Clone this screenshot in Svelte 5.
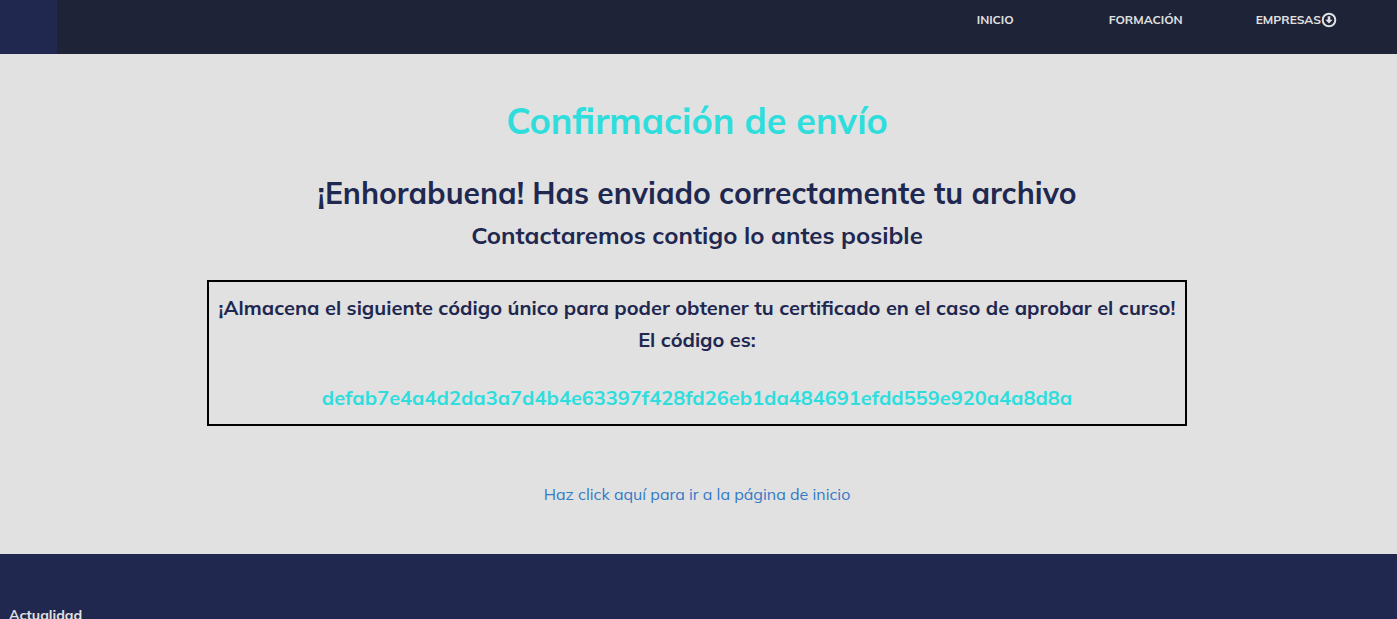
<script>
  const code = 'defab7e4a4d2da3a7d4b4e63397f428fd26eb1da484691efdd559e920a4a8d8a';
</script>

<div class="page">
  <header>
    <div class="brand"></div>
    <nav>
      <a href="#inicio">INICIO</a>
      <a href="#formacion">FORMACIÓN</a>
      <a href="#empresas">EMPRESAS<svg viewBox="0 0 16 16" width="16" height="16" aria-hidden="true">
          <circle cx="8" cy="8" r="6.300" fill="none" stroke="currentColor" stroke-width="2" />
          <path d="M6.700 4.200h2.600v3.600h2.300L8 11.600 4.400 7.800h2.300z" fill="currentColor" />
        </svg></a>
    </nav>
  </header>

  <main>
    <h1>Confirmación de envío</h1>
    <h2>¡Enhorabuena! Has enviado correctamente tu archivo</h2>
    <h3>Contactaremos contigo lo antes posible</h3>
    <section>
      <p>¡Almacena el siguiente código único para poder obtener tu certificado en el caso de aprobar el curso!</p>
      <p>El código es:</p>
      <p class="code">{code}</p>
    </section>
    <a class="home" href="#inicio">Haz click aquí para ir a la página de inicio</a>
  </main>

  <footer>
    <h4>Actualidad</h4>
  </footer>
</div>

<style>
  :global(body) {
    margin: 0;
    background: #20284f;
  }
  .page {
    display: flex;
    flex-direction: column;
    height: 100vh;
    overflow: hidden;
    font-family: Mulish, Muli, Lato, sans-serif;
    color: #1f2850;
    background: #e1e1e1;
  }
  header {
    display: flex;
    flex: none;
    background: #1e2337;
  }
  .brand {
    width: 57px;
    background: #20284f;
  }
  nav {
    display: flex;
    justify-content: flex-end;
    flex: 1;
    padding: 10px 60px 24px 0;
  }
  nav a {
    display: flex;
    align-items: center;
    height: 20px;
    color: #e1e1e1;
    font-size: 12px;
    font-weight: 700;
    line-height: 18px;
    text-decoration: none;
  }
  nav a + a {
    margin-left: 95px;
  }
  nav a:last-child {
    margin-left: 73px;
  }
  main {
    display: flex;
    flex: none;
    flex-direction: column;
    align-items: center;
    padding: 44px 23px 48px 20px;
    text-align: center;
  }
  h1,
  h2,
  h3,
  h4,
  p {
    margin: 0;
    font-weight: 700;
  }
  h1 {
    color: #30dddd;
    font-size: 36px;
    line-height: 46px;
  }
  h2 {
    margin-top: 26px;
    font-size: 30px;
    line-height: 46px;
  }
  h3 {
    font-size: 24px;
    line-height: 38px;
  }
  section {
    box-sizing: border-box;
    width: 100%;
    max-width: 980px;
    margin-top: 26px;
    padding: 10px 4px;
    border: 2px solid #000;
  }
  p {
    font-size: 20px;
    line-height: 32px;
  }
  .code {
    margin-top: 26px;
    color: #30dddd;
    overflow-wrap: anywhere;
  }
  .home {
    margin-top: 56px;
    color: #337ac7;
    font-size: 16px;
    font-weight: 400;
    line-height: 24px;
    text-decoration: none;
  }
  footer {
    flex: 1 0 auto;
    padding: 50px 9px 0;
    background: #20284f;
    color: #e1e1e1;
  }
  h4 {
    font-size: 14px;
    line-height: 22px;
  }
</style>
